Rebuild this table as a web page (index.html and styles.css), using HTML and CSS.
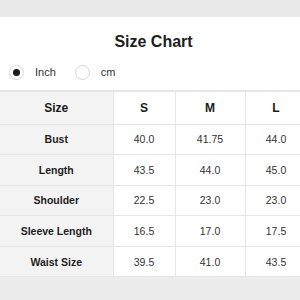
FILE: index.html
```html
<!DOCTYPE html>
<html lang="en">
<head>
    <meta charset="UTF-8">
    <meta name="viewport" content="width=device-width, initial-scale=1.0">
    <title>Size Chart</title>
    <link rel="stylesheet" href="styles.css">
</head>
<body>
    <div class="top-bar"></div>
    <div class="sheet">
        <h1 class="sheet-title">Size Chart</h1>
        <div class="units">
            <label class="unit"><span class="radio checked"></span>Inch</label>
            <label class="unit"><span class="radio"></span>cm</label>
        </div>
        <table class="size-table">
            <colgroup>
                <col class="col-name">
                <col class="col-s">
                <col class="col-m">
                <col class="col-l">
            </colgroup>
            <tr class="head"><th>Size</th><td>S</td><td>M</td><td>L</td></tr>
            <tr><th>Bust</th><td>40.0</td><td>41.75</td><td>44.0</td></tr>
            <tr><th>Length</th><td>43.5</td><td>44.0</td><td>45.0</td></tr>
            <tr><th>Shoulder</th><td>22.5</td><td>23.0</td><td>23.0</td></tr>
            <tr><th>Sleeve Length</th><td>16.5</td><td>17.0</td><td>17.5</td></tr>
            <tr><th>Waist Size</th><td>39.5</td><td>41.0</td><td>43.5</td></tr>
        </table>
    </div>
</body>
</html>
```

FILE: styles.css
```css
* {
    margin: 0;
    padding: 0;
    box-sizing: border-box;
}

html, body {
    width: 300px;
    height: 300px;
    overflow: hidden;
}

body {
    font-family: "Liberation Sans", Arial, sans-serif;
    background: #ececec;
    color: #222;
}

.top-bar {
    height: 17px;
    background: #e9e9e9;
}

.sheet {
    width: 307px;
    background: white;
    overflow: hidden;
}

.sheet-title {
    font-size: 16px;
    font-weight: bold;
    text-align: center;
    padding-top: 16px;
    height: 42px;
    color: #1e1e1e;
}

.units {
    display: flex;
    align-items: center;
    gap: 19px;
    padding-left: 9px;
    height: 26px;
}

.unit {
    display: flex;
    align-items: center;
    gap: 11px;
    font-size: 11px;
    color: #333;
}

.radio {
    width: 15px;
    height: 15px;
    border-radius: 50%;
    border: 1px solid #d6d6d6;
    display: flex;
    align-items: center;
    justify-content: center;
}

.radio.checked::after {
    content: "";
    width: 7px;
    height: 7px;
    border-radius: 50%;
    background: #1a1a1a;
}

.size-table {
    table-layout: fixed;
    width: 307px;
    margin-top: 5px;
    border-collapse: collapse;
    font-size: 10.5px;
}

.col-name { width: 113px; }
.col-s { width: 62px; }
.col-m { width: 70px; }
.col-l { width: 62px; }

.size-table th,
.size-table td {
    border: 1px solid #e6e6e6;
    text-align: center;
    height: 30.6px;
}

.size-table tr:first-child th,
.size-table tr:first-child td {
    border-top: 2px solid #e6e6e6;
}

.size-table th {
    background: #f3f3f3;
    font-weight: bold;
    border-left: none;
    color: #1e1e1e;
}

.size-table td {
    color: #333;
}

.size-table .head th,
.size-table .head td {
    height: 33px;
    font-size: 12px;
    font-weight: bold;
    color: #1a1a1a;
}
```
